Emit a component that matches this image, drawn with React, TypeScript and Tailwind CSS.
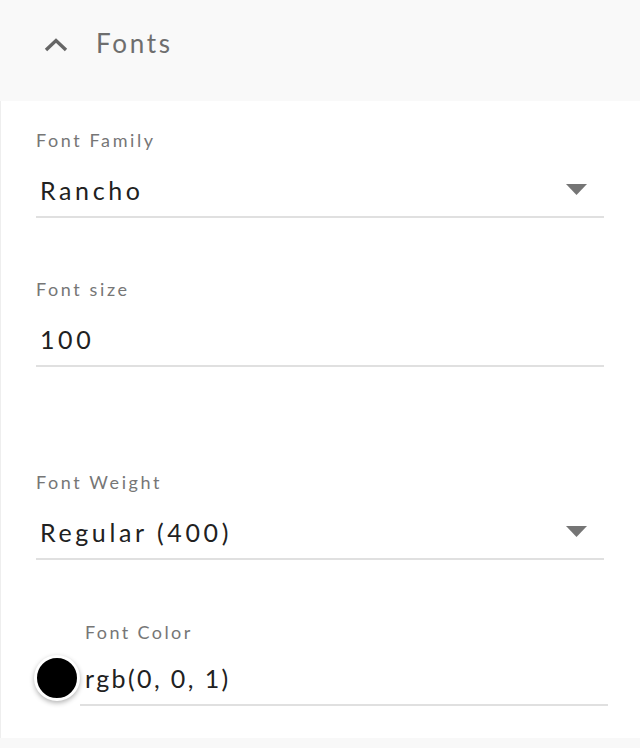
const font = { fontFamily: 'Lato, "Open Sans", sans-serif' };

function Caret() {
  return (
    <svg width="21" height="12" viewBox="0 0 21 12" className="shrink-0">
      <path d="M0 0 H21 L10.5 11 Z" fill="#757575" />
    </svg>
  );
}

function Field({ label, value, select }: { label: string; value: string; select?: boolean }) {
  return (
    <div>
      <div className="text-[18px] leading-[22px] tracking-[2.6px] text-[#767676]">{label}</div>
      <div className="mt-[24px] flex items-center justify-between pl-[4px] pr-[17px]">
        <span className="text-[25px] leading-[30px] tracking-[3.6px] text-[#212121]">{value}</span>
        {select && <Caret />}
      </div>
      <div className="mt-[11px] h-[2px] bg-[#e0e0e0]" />
    </div>
  );
}

export default function App() {
  return (
    <div className="w-[640px] h-[748px] flex flex-col bg-[#f8f8f8]" style={font}>
      <div className="h-[101px] shrink-0 flex items-start bg-[#f9f9f9] pl-[44px] pt-[28px]">
        <svg width="24" height="16" viewBox="0 0 24 16" className="mt-[9px]">
          <path d="M2 13 L12 3.5 L22 13" fill="none" stroke="#666" strokeWidth="3.4" />
        </svg>
        <span className="ml-[28px] text-[26px] leading-[31px] tracking-[2.7px] text-[#6e6e6e]">Fonts</span>
      </div>
      <div className="h-[637px] shrink-0 bg-white border-l border-[#eeeeee] pl-[35px] pr-[36px] pt-[28px]">
        <Field label="Font Family" value="Rancho" select />
        <div className="mt-[60px]">
          <Field label="Font size" value="100" />
        </div>
        <div className="mt-[104px]">
          <Field label="Font Weight" value="Regular (400)" select />
        </div>
        <div className="mt-[61px] flex items-end">
          <div className="w-[46px] h-[46px] -ml-[2px] mb-[5px] rounded-full bg-black border-[3px] border-white shadow-[0_2px_5px_rgba(0,0,0,0.3)] shrink-0" />
          <div className="flex-1 -mr-[4px]">
            <div className="pl-[5px] text-[18px] leading-[22px] tracking-[2.4px] text-[#767676]">Font Color</div>
            <div className="mt-[20px] pl-[5px] text-[25px] leading-[30px] tracking-[2.4px] text-[#212121]">rgb(0, 0, 1)</div>
            <div className="mt-[11px] h-[2px] bg-[#e0e0e0]" />
          </div>
        </div>
      </div>
    </div>
  );
}
